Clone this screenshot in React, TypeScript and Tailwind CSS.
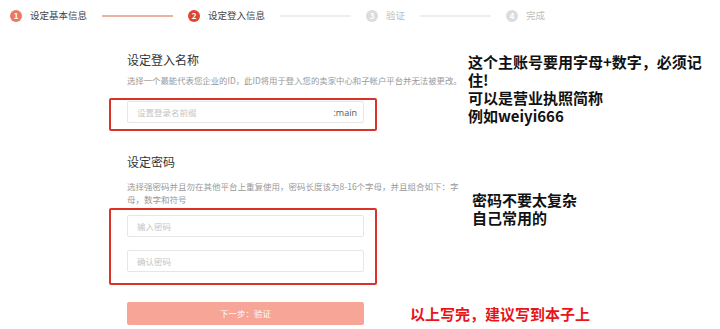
import React from "react";

const font = { fontFamily: '"Noto Sans CJK SC", "Noto Sans", sans-serif' };

function Step({ n, label, state, line }: { n: number; label: string; state: "done" | "active" | "todo"; line?: "done" | "todo" }) {
  const circle =
    state === "done" ? "bg-[#ec7a62]" : state === "active" ? "bg-[#e0472f]" : "bg-[#dcdcdc]";
  const text = state === "todo" ? "text-[#bdbdbd]" : "text-[#444]";
  return (
    <div className="flex items-center">
      <div className={`w-[12px] h-[12px] rounded-full ${circle} flex items-center justify-center text-white text-[8px] leading-none font-bold`}>
        {n}
      </div>
      <span className={`ml-[8px] text-[9.5px] leading-none ${text}`}>{label}</span>
      {line && (
        <div className={`ml-[15px] mr-[15px] w-[71px] h-[1.5px] ${line === "done" ? "bg-[#e9b3a3]" : "bg-[#eeeeee]"}`} />
      )}
    </div>
  );
}

function Field({ placeholder, suffix }: { placeholder: string; suffix?: string }) {
  return (
    <div className="w-[237px] h-[22px] border border-[#e6e6e6] rounded-[2px] bg-white flex items-center justify-between pl-[9px] pr-[6px]">
      <span className="text-[8.5px] text-[#c4c4c4] leading-none">{placeholder}</span>
      {suffix && <span className="text-[9px] text-[#555] leading-none" style={{ fontFamily: '"Open Sans", sans-serif' }}>{suffix}</span>}
    </div>
  );
}

export default function App() {
  return (
    <div className="relative w-[720px] h-[329px] bg-white overflow-hidden" style={font}>
      <div className="h-[32px] flex items-center pl-[10px]">
        <Step n={1} label="设定基本信息" state="done" line="done" />
        <Step n={2} label="设定登入信息" state="active" line="todo" />
        <Step n={3} label="验证" state="todo" line="todo" />
        <Step n={4} label="完成" state="todo" />
      </div>

      <div className="flex">
        <div className="ml-[127px] w-[338px] shrink-0 flex flex-col">
          <div className="mt-[22px] text-[12px] leading-[12px] text-[#333]">设定登入名称</div>
          <div className="mt-[8px] text-[8.4px] leading-[12px] text-[#999] whitespace-nowrap">
            选择一个最能代表您企业的ID，此ID将用于登入您的卖家中心和子帐户平台并无法被更改。
          </div>
          <div className="mt-[12px] -ml-[18px] w-[268px] border-2 border-[#d8322b] rounded-[2px] pl-[16px] pt-[1px] pb-[6px]">
            <Field placeholder="设置登录名前缀" suffix=":main" />
          </div>

          <div className="mt-[25px] text-[12px] leading-[12px] text-[#333]">设定密码</div>
          <div className="mt-[12px] w-[336px] text-[8.5px] leading-[13px] text-[#999]">
            选择强密码并且勿在其他平台上重复使用，密码长度该为8-16个字母，并且组合如下：字母，数字和符号
          </div>
          <div className="mt-[2px] -ml-[18px] w-[268px] border-2 border-[#d8322b] rounded-[2px] pl-[16px] pt-[5px] pb-[11px] flex flex-col gap-[13px]">
            <Field placeholder="输入密码" />
            <Field placeholder="确认密码" />
          </div>

          <div className="mt-[17px] w-[480px] flex items-center">
            <div className="w-[237px] h-[23px] shrink-0 rounded-[2px] bg-[#f6a597] flex items-center justify-center text-white text-[8.5px] leading-none">
              下一步：验证
            </div>
            <div className="ml-[46px] text-[15px] leading-none font-bold text-[#e8141a] whitespace-nowrap">
              以上写完，建议写到本子上
            </div>
          </div>
        </div>

        <div className="ml-[3px] flex flex-col">
          <div className="mt-[21px] w-[242px] text-[15px] leading-[18px] font-bold text-[#111]">
            这个主账号要用字母+数字，必须记住!
            <br />
            可以是营业执照简称
            <br />
            例如weiyi666
          </div>
          <div className="mt-[66px] ml-[4px] text-[15px] leading-[18px] font-bold text-[#111]">
            密码不要太复杂
            <br />
            自己常用的
          </div>
        </div>
      </div>
    </div>
  );
}
